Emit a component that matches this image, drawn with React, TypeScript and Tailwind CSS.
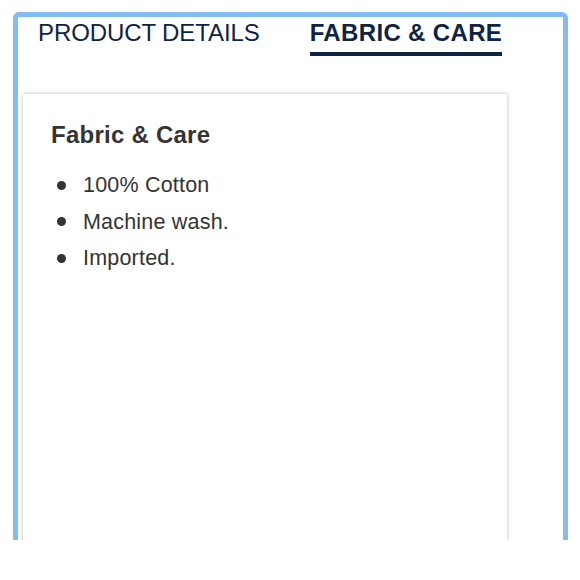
import React, { useState } from 'react';

const tabs = ['PRODUCT DETAILS', 'FABRIC & CARE'];
const items = ['100% Cotton', 'Machine wash.', 'Imported.'];

export default function App() {
  const [active, setActive] = useState(1);

  return (
    <div className="w-[580px] h-[580px] bg-white pt-[12px] pl-[13px]" style={{ fontFamily: '"Liberation Sans", Arial, sans-serif' }}>
      <div className="w-[555px] h-[528px] border-[5px] border-b-0 border-[#84bbf2] rounded-t-[6px] overflow-hidden">
        <div className="flex pl-[20px] pt-[2px]">
          {tabs.map((t, i) => (
            <button
              key={t}
              onClick={() => setActive(i)}
              className={`text-[24px] leading-[28px] text-[#0e2444] pb-[5px] ${i === 0 ? 'mr-[50px] tracking-[-0.1px]' : ''} ${
                active === i ? 'font-bold tracking-[0.35px] border-b-4 border-[#0e2444]' : 'border-b-4 border-transparent'
              }`}
            >
              {t}
            </button>
          ))}
        </div>

        <div className="ml-[5px] mt-[38px] w-[484px] h-[520px] bg-white shadow-[0_0_4px_rgba(0,0,0,0.28)] pl-[28px] pt-[27px]">
          <h2 className="text-[24px] leading-[28px] font-bold tracking-[0.25px] text-[#333333]">Fabric &amp; Care</h2>
          <ul className="mt-[18px]">
            {items.map((it) => (
              <li key={it} className="flex items-center text-[21.5px] leading-[36.5px] tracking-[0.2px] text-[#333333]">
                <span className="ml-[6px] mr-[17px] w-[9px] h-[9px] rounded-full bg-[#333333]" />
                {it}
              </li>
            ))}
          </ul>
        </div>
      </div>
    </div>
  );
}
